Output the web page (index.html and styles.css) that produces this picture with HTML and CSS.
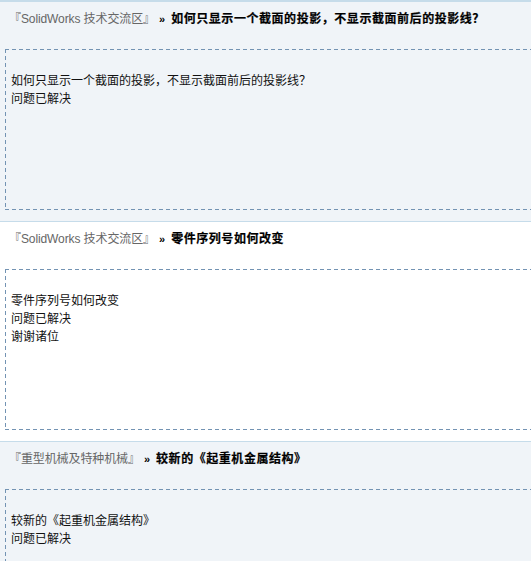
FILE: index.html
```html
<!DOCTYPE html>
<html lang="zh-CN">
<head>
<meta charset="utf-8">
<title>问题列表</title>
<link rel="stylesheet" href="styles.css">
</head>
<body>
<div class="list">
  <div class="item alt">
    <div class="head">
      <span class="forum">『SolidWorks 技术交流区』</span>
      <span class="raquo">»</span>
      <span class="title">如何只显示一个截面的投影，不显示截面前后的投影线？</span>
    </div>
    <div class="box">
      <p>如何只显示一个截面的投影，不显示截面前后的投影线？</p>
      <p>问题已解决</p>
    </div>
  </div>
  <div class="item">
    <div class="head">
      <span class="forum">『SolidWorks 技术交流区』</span>
      <span class="raquo">»</span>
      <span class="title">零件序列号如何改变</span>
    </div>
    <div class="box">
      <p>零件序列号如何改变</p>
      <p>问题已解决</p>
      <p>谢谢诸位</p>
    </div>
  </div>
  <div class="item alt">
    <div class="head">
      <span class="forum">『重型机械及特种机械』</span>
      <span class="raquo">»</span>
      <span class="title">较新的《起重机金属结构》</span>
    </div>
    <div class="box">
      <p>较新的《起重机金属结构》</p>
      <p>问题已解决</p>
    </div>
  </div>
</div>
</body>
</html>
```

FILE: styles.css
```css
html, body {
  margin: 0;
  padding: 0;
  overflow: hidden;
  background: #ffffff;
}

body {
  font-family: "Liberation Sans", "Noto Sans CJK SC", sans-serif;
  font-size: 12px;
  line-height: 18px;
  color: #000;
}

.list {
  border-top: 2px solid #c6dcea;
  overflow: hidden;
}

.item {
  border-bottom: 1px solid #c6dcea;
  background: #ffffff;
  padding: 8px 0 0 9px;
  height: 211px;
}

.item.alt {
  background: #f0f4f8;
}

.head {
  display: flex;
  align-items: baseline;
  white-space: nowrap;
  height: 18px;
}

.forum {
  color: #666666;
  letter-spacing: -0.1px;
}

.raquo {
  font-weight: bold;
  font-size: 11px;
  margin-left: 4px;
  margin-right: 6px;
  color: #000;
}

.title {
  font-weight: bold;
  letter-spacing: 0.55px;
  color: #000;
  -webkit-text-stroke: 0.2px #000;
}

.box {
  margin: 21px -40px 0 -4px;
  height: 161px;
  box-sizing: border-box;
  padding: 22px 6px 0 6px;
  background:
    linear-gradient(90deg, #7393b3 0 4px, transparent 4px 7px) left top / 7px 1px repeat-x,
    linear-gradient(90deg, #7393b3 0 4px, transparent 4px 7px) left bottom / 7px 1px repeat-x,
    linear-gradient(180deg, #7393b3 0 4px, transparent 4px 7px) left top / 1px 7px repeat-y;
}

.box p {
  margin: 0;
  font-family: "Noto Sans CJK SC", sans-serif;
  color: #111;
}
```
